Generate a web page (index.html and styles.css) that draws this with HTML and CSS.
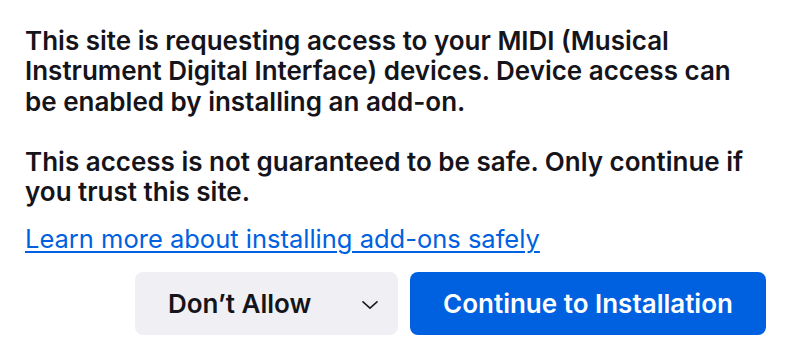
FILE: index.html
```html
<!DOCTYPE html>
<html lang="en">
<head>
<meta charset="utf-8">
<title>Add-on permission</title>
<link rel="stylesheet" href="styles.css">
</head>
<body>
<div class="dialog">
  <p class="msg">This site is requesting access to your MIDI (Musical Instrument Digital Interface) devices. Device access can be enabled by installing an add-on.</p>
  <p class="msg warn">This access is not guaranteed to be safe. Only continue if you trust this site.</p>
  <a class="learn" href="#">Learn more about installing add-ons safely</a>
  <div class="actions">
    <button class="btn secondary" type="button">
      <span class="label">Don’t Allow</span>
      <svg class="chev" width="16" height="8" viewBox="0 0 16 8" aria-hidden="true"><path d="M1 0.8 L8 7.2 L15 0.8" fill="none" stroke="#1c1b22" stroke-width="1.6" stroke-linecap="round" stroke-linejoin="round"/></svg>
    </button>
    <button class="btn primary" type="button">Continue to Installation</button>
  </div>
</div>
</body>
</html>
```
FILE: styles.css
```css
html, body {
  margin: 0;
  padding: 0;
  background: #ffffff;
}
body {
  font-family: Inter, "Noto Sans", "Liberation Sans", sans-serif;
  color: #15141a;
}
.dialog {
  width: 741px;
  padding: 25.5px 0 0 25px;
  display: flex;
  flex-direction: column;
}
.msg {
  margin: 0;
  font-size: 26px;
  font-weight: 600;
  line-height: 30.5px;
}
.warn {
  margin-top: 29.5px;
}
.learn {
  margin-top: 16.5px;
  font-size: 25.5px;
  line-height: 30.5px;
  color: #0061e0;
  text-decoration: underline;
  text-decoration-thickness: 2px;
  text-underline-offset: 3px;
  align-self: flex-start;
}
.actions {
  margin-top: 17.5px;
  display: flex;
  justify-content: flex-end;
  gap: 12px;
}
.btn {
  height: 63px;
  border: none;
  border-radius: 8px;
  font-family: inherit;
  font-size: 26px;
  font-weight: 600;
  display: flex;
  align-items: center;
}
.secondary {
  width: 263px;
  background: #f0f0f4;
  color: #15141a;
  padding: 0 20px 0 33px;
  justify-content: space-between;
}
.chev {
  margin-top: 3px;
}
.primary {
  width: 356px;
  background: #0061e0;
  color: #ffffff;
  justify-content: center;
}
```
